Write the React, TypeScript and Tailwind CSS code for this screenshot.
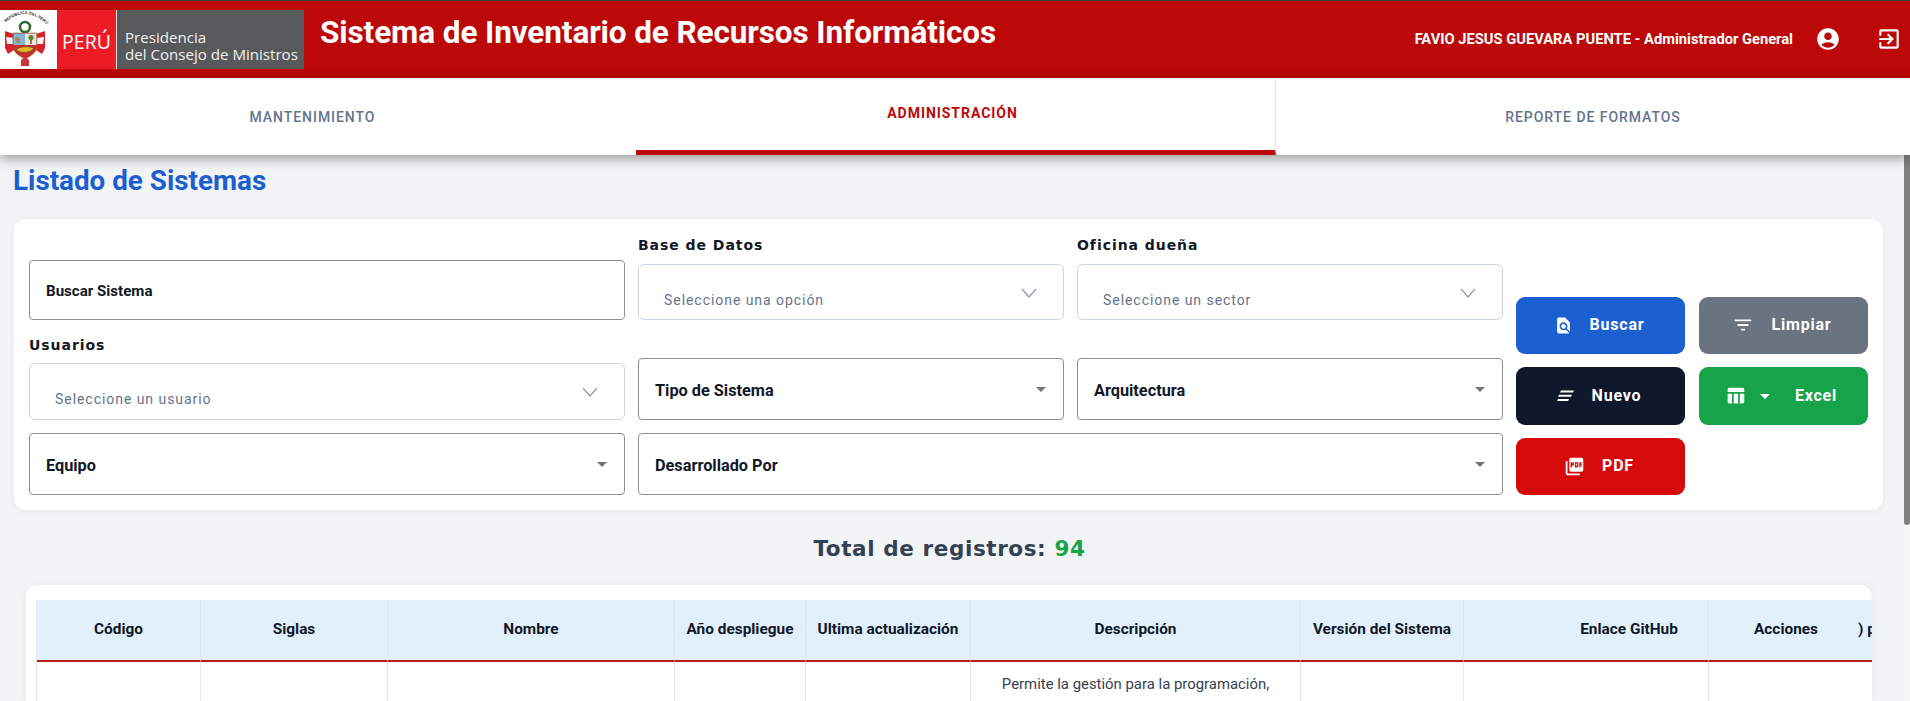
import React from "react";
import { MdAccountCircle, MdExitToApp, MdFindInPage, MdFilterList, MdTableChart, MdArrowDropDown, MdPictureAsPdf } from "react-icons/md";

function Arms() {
  return (
    <svg viewBox="0 0 57 59" className="w-[57px] h-[59px]">
      <defs>
        <path id="arc" d="M4 14 Q 25 -6 46 14" fill="none" />
      </defs>
      <text fontSize="4.2" fontWeight="700" fill="#333" fontFamily="'Liberation Sans', sans-serif">
        <textPath href="#arc" startOffset="4%">REPÚBLICA DEL PERÚ</textPath>
      </text>
      <circle cx="25" cy="17" r="5" fill="none" stroke="#2f6b33" strokeWidth="2.6" />
      <path d="M5 21 L14 24 L14 40 L8 44 L5 38Z" fill="#d5232b" />
      <path d="M45 21 L36 24 L36 40 L42 44 L45 38Z" fill="#d5232b" />
      <path d="M6 27 L14 28 L14 34 L7 34Z" fill="#f4f4f4" />
      <path d="M44 27 L36 28 L36 34 L43 34Z" fill="#f4f4f4" />
      <path d="M13 23 H37 V36 C37 41 33 45 25 49 C17 45 13 41 13 36Z" fill="#cf2a2e" stroke="#7d6a2d" strokeWidth="0.6" />
      <rect x="13.5" y="23.5" width="11.5" height="11.5" fill="#7fb6d6" />
      <rect x="25" y="23.5" width="11.5" height="11.5" fill="#e6e6d6" />
      <path d="M17 33 V27 M15.5 29 H20 M19 33 V29" stroke="#b87b34" strokeWidth="1.3" />
      <path d="M31 34 V28" stroke="#6f4a22" strokeWidth="1.4" />
      <circle cx="31" cy="27.5" r="2.6" fill="#4f8a3c" />
      <path d="M16 40 C19 36 29 36 34 38 C31 43 21 44 16 40Z" fill="#e2b62e" stroke="#5b4a14" strokeWidth="0.7" />
      <path d="M21 50 L25 47 L29 50 V56 H21Z" fill="#c8383a" />
    </svg>
  );
}

function Logo() {
  return (
    <div className="flex h-[59px] w-[304px] items-stretch">
      <div className="w-[57px] bg-white shrink-0"><Arms /></div>
      <div className="w-[60px] bg-[#ed1c24] flex items-center justify-center shrink-0 border-r border-[#e6e6e6]">
        <span className="text-white text-[19.5px] mt-[5px] leading-none" style={{ fontFamily: "'Open Sans', sans-serif" }}>PERÚ</span>
      </div>
      <div className="flex-1 bg-[#58595b] text-[#f1f1f1] pl-[8px] pt-[19px] text-[15.1px] leading-[17px] whitespace-nowrap" style={{ fontFamily: "'Open Sans', sans-serif" }}>
        <div>Presidencia</div>
        <div>del Consejo de Ministros</div>
      </div>
    </div>
  );
}

function Header() {
  return (
    <header className="h-[78px] shrink-0 bg-[#bc0808] border-t border-[#3a3a3a] flex items-start">
      <div className="mt-[9px]"><Logo /></div>
      <h1 className="ml-[16px] mt-[13px] text-[31.5px] leading-[38px] font-bold text-white tracking-[-0.1px] whitespace-nowrap">Sistema de Inventario de Recursos Informáticos</h1>
      <div className="ml-auto flex items-center mt-[25px] pr-[8px] text-white">
        <span className="text-[14.7px] font-bold whitespace-nowrap">FAVIO JESUS GUEVARA PUENTE - Administrador General</span>
        <MdAccountCircle className="ml-[22px] w-[26px] h-[26px]" />
        <MdExitToApp className="ml-[35px] w-[26px] h-[26px]" />
      </div>
    </header>
  );
}

function Tabs() {
  return (
    <nav className="h-[77px] shrink-0 bg-white grid grid-cols-[636px_640px_1fr] shadow-[0_3px_12px_rgba(0,0,0,0.4)] relative z-10 text-[14px] font-medium uppercase tracking-[0.95px]">
      <a className="flex items-center justify-center text-[#64748b] pr-[11px] pt-[2px]">Mantenimiento</a>
      <a className="flex items-center justify-center text-[#bc0808] font-bold border-b-[5px] border-[#bc0808] pb-[1px] pr-[6px] border-r border-r-[#e5e7eb]">Administración</a>
      <a className="flex items-center justify-center text-[#64748b] pt-[2px]">Reporte de Formatos</a>
    </nav>
  );
}

const labelCls = "block h-[20px] leading-[20px] text-[14px] font-bold tracking-[0.95px] text-[#111827]";
const labelFont = { fontFamily: "'DejaVu Sans', sans-serif" };

function Chevron() {
  return (
    <svg viewBox="0 0 16 10" className="w-[16px] h-[10px] text-[#8d9ab3] shrink-0" fill="none" stroke="currentColor" strokeWidth="1.2">
      <path d="M1 1 L8 9 L15 1" />
    </svg>
  );
}

function SelectField({ label, placeholder, labelGap, heightCls }: { label: string; placeholder: string; labelGap: string; heightCls: string }) {
  return (
    <div>
      <label className={labelCls + " " + labelGap} style={labelFont}>{label}</label>
      <div className={"bg-white border border-[#cbd5e6] rounded-[6px] flex items-start justify-between pl-[25px] pr-[26px] " + heightCls}>
        <span className="mt-[25px] text-[14px] leading-[20px] text-[#64748b] tracking-[0.95px] whitespace-nowrap">{placeholder}</span>
        <span className="mt-[23px]"><Chevron /></span>
      </div>
    </div>
  );
}

function Outlined({ label, caret = true, className = "" }: { label: string; caret?: boolean; className?: string }) {
  return (
    <div className={"bg-white border border-[#8f8f8f] rounded-[4px] flex items-center justify-between pl-[16px] pr-[10px] " + className}>
      <span className={(caret ? "text-[16.3px]" : "text-[15.1px]") + " font-bold text-[#111827] mt-[4.5px]"}>{label}</span>
      {caret && <MdArrowDropDown className="w-[24px] h-[24px] text-[#757575]" />}
    </div>
  );
}

function Btn({ color, icon, children, className = "pr-[3px]" }: { color: string; icon: React.ReactNode; children: React.ReactNode; className?: string }) {
  return (
    <button className={"rounded-[9px] flex items-center justify-center text-white text-[16px] font-bold tracking-[0.8px] " + color + " " + className}>
      {icon}
      {children}
    </button>
  );
}

function Filters() {
  return (
    <section className="ml-[14px] mr-[21px] mt-[19.5px] bg-white rounded-[12px] shadow-[0_1px_6px_rgba(0,0,0,0.06)] pl-[15px] pr-[15px] pt-[16.5px] pb-[15px] grid grid-cols-[596px_426px_426px_1fr] gap-x-[13px] gap-y-[13px] items-end">
      <Outlined label="Buscar Sistema" caret={false} className="h-[60px]" />
      <SelectField label="Base de Datos" placeholder="Seleccione una opción" labelGap="mb-[8.5px]" heightCls="h-[56px]" />
      <SelectField label="Oficina dueña" placeholder="Seleccione un sector" labelGap="mb-[8.5px]" heightCls="h-[56px]" />
      <div className="row-span-3 self-end grid grid-cols-2 grid-rows-[57px_58px_57px] gap-x-[14px] gap-y-[13px]">
        <Btn color="bg-[#1c5fd0]" icon={<MdFindInPage className="w-[19px] h-[19px] mr-[17px]" />}>Buscar</Btn>
        <Btn color="bg-[#6b7280]" icon={<MdFilterList className="w-[22px] h-[22px] mr-[17px]" />}>Limpiar</Btn>
        <Btn color="bg-[#0f172a]" icon={
          <svg viewBox="0 0 17 12" className="w-[17px] h-[12px] mr-[18px]" fill="currentColor">
            <path d="M4 0.5 H17 L16 2.5 H3Z M2 4.8 H15 L14 6.8 H1Z M1 9 H12 L11 11 H0Z" />
          </svg>
        }>Nuevo</Btn>
        <Btn color="bg-[#16a34a]" className="pr-[5px]" icon={
          <span className="flex items-center mr-[25px]">
            <MdTableChart className="w-[21px] h-[21px] mr-[14px]" />
            <MdArrowDropDown className="w-[24px] h-[24px] -mx-[7px]" />
          </span>
        }>Excel</Btn>
        <Btn color="bg-[#d60a0a]" icon={<MdPictureAsPdf className="w-[21px] h-[21px] mr-[17px]" />}>PDF</Btn>
      </div>
      <SelectField label="Usuarios" placeholder="Seleccione un usuario" labelGap="mt-[2px] mb-[8px]" heightCls="h-[57px]" />
      <Outlined label="Tipo de Sistema" className="h-[62px]" />
      <Outlined label="Arquitectura" className="h-[62px]" />
      <Outlined label="Equipo" className="h-[62px]" />
      <Outlined label="Desarrollado Por" className="col-span-2 h-[62px]" />
    </section>
  );
}

const thCls = "border-r border-[#dfe5ea] font-bold text-[15.4px] text-[#111827] whitespace-nowrap border-b-2 border-b-[#b91c1c]";
const tdCls = "border-r border-[#e5e7eb] align-top";

function DataTable() {
  return (
    <section className="ml-[26px] mr-[32px] mt-[22px] bg-white rounded-t-[12px] pl-[10px] pt-[15px] overflow-hidden flex-1 shadow-[0_0_8px_rgba(0,0,0,0.06)]">
      <table className="table-fixed w-[1926px] border-separate border-spacing-0 border-l border-[#e5e7eb]">
        <colgroup>
          <col className="w-[164px]" />
          <col className="w-[187px]" />
          <col className="w-[287px]" />
          <col className="w-[131px]" />
          <col className="w-[165px]" />
          <col className="w-[330px]" />
          <col className="w-[163px]" />
          <col className="w-[245px]" />
          <col className="w-[154px]" />
          <col className="w-[100px]" />
        </colgroup>
        <thead className="bg-[#e1f0fc]">
          <tr className="h-[62px]">
            <th className={thCls}>Código</th>
            <th className={thCls}>Siglas</th>
            <th className={thCls}>Nombre</th>
            <th className={thCls}>Año despliegue</th>
            <th className={thCls}>Ultima actualización</th>
            <th className={thCls}>Descripción</th>
            <th className={thCls}>Versión del Sistema</th>
            <th className={thCls + " pl-[86px]"}>Enlace GitHub</th>
            <th className={thCls + " border-r-0"}>Acciones</th>
            <th className={thCls + " border-r-0 text-left"}><span className="block -ml-[5px]">) por</span></th>
          </tr>
        </thead>
        <tbody>
          <tr>
            <td className={tdCls}></td>
            <td className={tdCls}></td>
            <td className={tdCls}></td>
            <td className={tdCls}></td>
            <td className={tdCls}></td>
            <td className={tdCls + " text-center text-[14.9px] leading-[22.5px] text-[#374151] pt-[11px] px-[24px]"}>
              Permite la gestión para la programación, orientación y control de las actividades
            </td>
            <td className={tdCls}></td>
            <td className={tdCls}></td>
            <td className={tdCls + " border-r-0"}></td>
            <td></td>
          </tr>
        </tbody>
      </table>
    </section>
  );
}

export default function App() {
  return (
    <div className="w-[1910px] h-[701px] overflow-hidden flex flex-col bg-[#f3f4f6]" style={{ fontFamily: "Roboto, sans-serif" }}>
      <Header />
      <Tabs />
      <div className="flex-1 min-h-0 flex">
        <main className="flex-1 min-w-0 flex flex-col">
          <h2 className="ml-[13px] mt-[7px] text-[27.8px] leading-[37px] font-bold text-[#1c5fd0]">Listado de Sistemas</h2>
          <Filters />
          <p className="mt-[25.5px] pr-[5px] text-center text-[21.5px] leading-[28px] font-bold text-[#334155] tracking-[0.6px]" style={labelFont}>
            Total de registros: <span className="text-[#16a34a]">94</span>
          </p>
          <DataTable />
        </main>
        <aside className="w-[6px] shrink-0 bg-[#f6f6f6]">
          <div className="h-[370px] bg-[#808080] rounded-b-[3px]"></div>
        </aside>
      </div>
    </div>
  );
}
